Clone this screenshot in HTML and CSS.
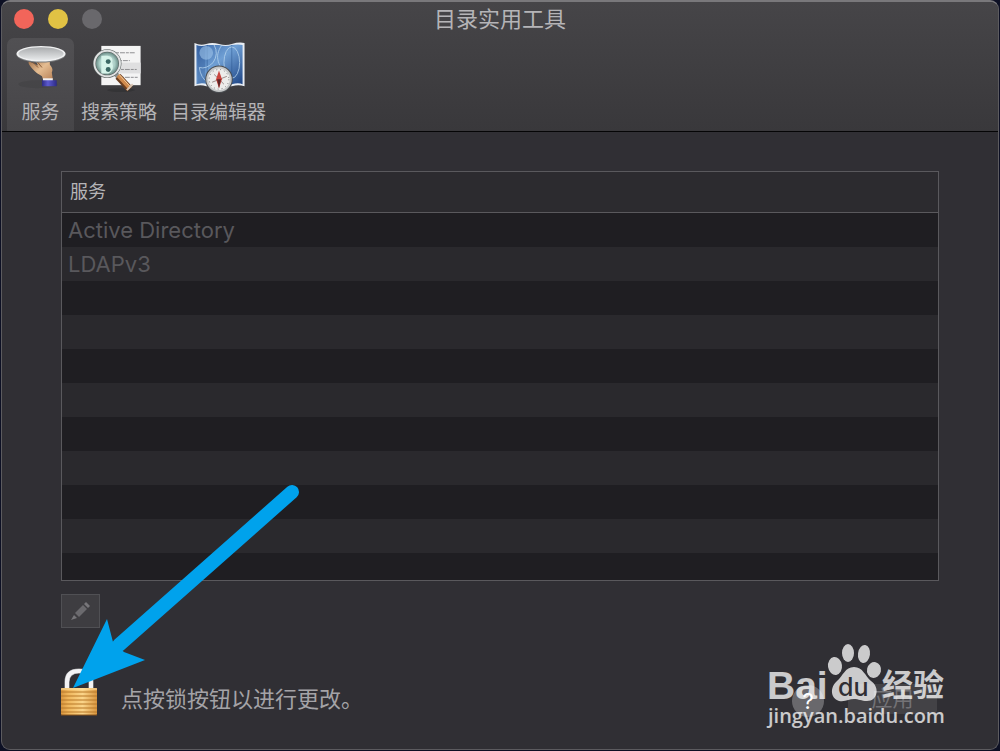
FILE: index.html
```html
<!DOCTYPE html>
<html lang="zh-CN">
<head>
    <meta charset="UTF-8">
    <meta name="viewport" content="width=device-width, initial-scale=1.0">
    <title>目录实用工具</title>
    <link rel="stylesheet" href="styles.css">
</head>
<body>
    <div class="window">
        <header class="header">
            <div class="titlebar">
                <div class="lights">
                    <button type="button" class="light close" aria-label="关闭"></button>
                    <button type="button" class="light minimize" aria-label="最小化"></button>
                    <button type="button" class="light zoom" aria-label="缩放"></button>
                </div>
                <h1>目录实用工具</h1>
            </div>
            <nav class="toolbar">
                <button type="button" class="tab active">
                    <svg class="tab-icon" viewBox="15 40 52 56" aria-hidden="true">
                        <defs>
                            <linearGradient id="plate" x1="0" y1="0" x2="0" y2="1">
                                <stop offset="0" stop-color="#aaacae"/>
                                <stop offset="1" stop-color="#e8eaeb"/>
                            </linearGradient>
                            <linearGradient id="hand" x1="0" y1="0" x2="1" y2="1">
                                <stop offset="0" stop-color="#9a6a45"/>
                                <stop offset="0.5" stop-color="#e5bd92"/>
                                <stop offset="1" stop-color="#b98358"/>
                            </linearGradient>
                            <linearGradient id="cuff" x1="0" y1="0" x2="1" y2="0">
                                <stop offset="0" stop-color="#2d2b83"/>
                                <stop offset="0.4" stop-color="#5d5bd0"/>
                                <stop offset="1" stop-color="#2c2a86"/>
                            </linearGradient>
                        </defs>
                        <ellipse cx="38" cy="85" rx="20" ry="4" fill="#403f42" opacity="0.5"/>
                        <path d="M29 62 C27 63 30 67 32 69 C35 73 39 75 42 77 L43 80 H53 L52 73 C54 69 51 67 50 65 L50 59 L35 60 L38 66 Z" fill="url(#hand)"/>
                        <path d="M32 62 L38 68 M37 62 L42 68" stroke="#8b5c38" stroke-width="1" fill="none"/>
                        <rect x="43" y="79" width="10" height="3" fill="#f1eff2"/>
                        <path d="M42 81 H57 V87 H42 Z" fill="url(#cuff)"/>
                        <ellipse cx="41" cy="55" rx="25" ry="8" fill="#77797b"/>
                        <ellipse cx="41" cy="54" rx="25" ry="8" fill="#f0f1f2"/>
                        <ellipse cx="41" cy="54" rx="23" ry="6.5" fill="url(#plate)"/>
                    </svg>
                    <span>服务</span>
                </button>
                <button type="button" class="tab">
                    <svg class="tab-icon" viewBox="93 40 52 56" aria-hidden="true">
                        <defs>
                            <radialGradient id="lens">
                                <stop offset="0" stop-color="#e2f4ef"/>
                                <stop offset="0.6" stop-color="#a9cdc5"/>
                                <stop offset="1" stop-color="#50706b"/>
                            </radialGradient>
                        </defs>
                        <rect x="101" y="46" width="40" height="40" fill="#f4f4f4"/>
                        <rect x="103" y="63" width="38" height="11" fill="#dfdfe0"/>
                        <g stroke="#8d8d90" stroke-width="1" stroke-dasharray="3 1 5 1">
                            <path d="M116 53 H135"/>
                            <path d="M119 61 H130"/>
                            <path d="M121 70 H137"/>
                            <path d="M121 78 H138"/>
                        </g>
                        <ellipse cx="121" cy="91" rx="14" ry="2" fill="#2c2b2e" opacity="0.5"/>
                        <path d="M114 73 L120 79" stroke="#8d9294" stroke-width="5"/>
                        <path d="M118 77 L130 90" stroke="#6b3e1f" stroke-width="7"/>
                        <path d="M118 76 L130 89" stroke="#d08a4c" stroke-width="4"/>
                        <path d="M119 75 L131 88" stroke="#f4cc9e" stroke-width="1"/>
                        <path d="M127 91 L133 85" stroke="#d8c4b1" stroke-width="2"/>
                        <circle cx="107" cy="64" r="13" fill="url(#lens)" stroke="#59605f" stroke-width="3"/>
                        <circle cx="107" cy="64" r="13" fill="none" stroke="#e0e2e2" stroke-width="2"/>
                        <path d="M101 56 H107 Q114 57 112 63 Q115 71 108 74 H101 Z" fill="#d7f4ea"/>
                        <circle cx="108" cy="62" r="2.5" fill="#3b6864"/>
                        <circle cx="108" cy="70" r="2.5" fill="#3b6864"/>
                    </svg>
                    <span>搜索策略</span>
                </button>
                <button type="button" class="tab">
                    <svg class="tab-icon" viewBox="193 40 52 56" aria-hidden="true">
                        <defs>
                            <linearGradient id="map" x1="0" y1="0" x2="1" y2="1">
                                <stop offset="0" stop-color="#3a67a8"/>
                                <stop offset="0.45" stop-color="#6f9fd4"/>
                                <stop offset="1" stop-color="#1d4485"/>
                            </linearGradient>
                        </defs>
                        <path d="M194 43 Q200 46 206 44 T219 44 Q226 46 232 44 Q239 42 245 43 V87 Q239 85 232 87 H206 Q200 85 194 87 Z" fill="#e8edf3"/>
                        <path d="M196 45 Q201 47 207 45 H219 Q226 47 232 45 Q239 44 243 45 V85 Q239 83 232 85 H207 Q201 83 196 85 Z" fill="url(#map)"/>
                        <path d="M207 45 V85 M232 45 V85" stroke="#29558f" stroke-width="1" opacity="0.5"/>
                        <path d="M197 46 H205 V83 L197 85 Z" fill="#1e4686" opacity="0.3"/>
                        <circle cx="206" cy="53" r="7" fill="#9fc5e9" opacity="0.6"/>
                        <g fill="none" stroke="#b7d5ef" stroke-width="1" opacity="0.8">
                            <path d="M214 45 Q219 54 213 63 Q206 70 199 68 Q200 78 208 84"/>
                            <path d="M222 45 C213 58 219 66 229 80"/>
                            <ellipse cx="232" cy="63" rx="8" ry="16"/>
                        </g>
                        <circle cx="219" cy="80" r="14" fill="#4b4e52"/>
                        <circle cx="219" cy="80" r="12" fill="#edeceb" stroke="#c5c7c8" stroke-width="2"/>
                        <circle cx="219" cy="80" r="10" fill="none" stroke="#77797b" stroke-width="1" stroke-dasharray="1 3"/>
                        <path d="M212 83 L227 77 M214 75 L224 85" stroke="#9c8a89" stroke-width="1"/>
                        <path d="M219 71 L222 80 L219 89 L216 80 Z" fill="#c9453f"/>
                        <path d="M217 80 H221 L219 89 Z" fill="#5c2527"/>
                    </svg>
                    <span>目录编辑器</span>
                </button>
            </nav>
        </header>

        <main class="content">
            <table class="services">
                <thead>
                    <tr><th scope="col">服务</th></tr>
                </thead>
                <tbody>
                    <tr><td>Active Directory</td></tr>
                    <tr><td>LDAPv3</td></tr>
                    <tr><td></td></tr>
                    <tr><td></td></tr>
                    <tr><td></td></tr>
                    <tr><td></td></tr>
                    <tr><td></td></tr>
                    <tr><td></td></tr>
                    <tr><td></td></tr>
                    <tr><td></td></tr>
                    <tr class="partial"><td></td></tr>
                </tbody>
            </table>

            <button type="button" class="edit" aria-label="编辑" disabled>
                <svg viewBox="0 0 20 20" aria-hidden="true">
                    <path d="M0 19 L3 14 L6 17 Z" fill="#77767a"/>
                    <path d="M4 12 L12 4 L16 8 L8 16 Z" fill="#6b6a6e"/>
                    <path d="M13 3 L15 1 L19 5 L17 7 Z" fill="#77767a"/>
                </svg>
            </button>

            <footer class="footer">
                <button type="button" class="lock" aria-label="锁">
                    <svg viewBox="0 0 36 48" aria-hidden="true">
                        <defs>
                            <linearGradient id="brass" x1="0" y1="0" x2="1" y2="0">
                                <stop offset="0" stop-color="#d8953f"/>
                                <stop offset="0.2" stop-color="#f0b75d"/>
                                <stop offset="0.6" stop-color="#fbd58a"/>
                                <stop offset="1" stop-color="#d8953f"/>
                            </linearGradient>
                        </defs>
                        <path d="M6 24 V14 Q6 3 18 3 Q30 3 30 14 V24" fill="none" stroke="#a5a6a8" stroke-width="5"/>
                        <path d="M6 24 V14 Q6 3 18 3 Q30 3 30 14 V24" fill="none" stroke="#f3f3f4" stroke-width="4"/>
                        <rect x="0" y="20" width="36" height="27" rx="1" fill="url(#brass)"/>
                        <path d="M0 24 H36 M0 28 H36 M0 32 H36 M0 36 H36 M0 40 H36 M0 44 H36" stroke="#b87829" stroke-width="1"/>
                        <path d="M0 21 H36" stroke="#ffe5a7" stroke-width="1"/>
                        <path d="M0 47 H36" stroke="#8a551b" stroke-width="1"/>
                    </svg>
                </button>
                <p>点按锁按钮以进行更改。</p>
                <button type="button" class="help" aria-label="帮助">?</button>
                <button type="button" class="apply" disabled>应用</button>
            </footer>
        </main>

        <svg class="arrow" viewBox="0 0 228 206" aria-hidden="true">
            <path d="M219 9 L46 162" stroke="#00a2ec" stroke-width="14" stroke-linecap="round"/>
            <path d="M0 205 L34 136 L40 159 L51 169 L72 177 Z" fill="#00a2ec"/>
        </svg>

        <svg class="watermark" viewBox="0 0 184 88" aria-hidden="true">
            <g fill="#ffffff">
                <text class="wm-bai" x="-1" y="55">Bai</text>
                <ellipse cx="67" cy="22" rx="7" ry="9" transform="rotate(-8 67 22)"/>
                <ellipse cx="80" cy="9" rx="6" ry="9"/>
                <ellipse cx="96" cy="10" rx="6" ry="9" transform="rotate(8 96 10)"/>
                <ellipse cx="106" cy="26" rx="7" ry="8" transform="rotate(12 106 26)"/>
                <path d="M86 23 C95 23 97 32 103 37 C112 43 110 57 99 57 C93 57 91 55 86 55 C81 55 78 58 71 57 C62 54 62 43 69 37 C75 32 77 23 86 23 Z"/>
                <text class="wm-jingyan" x="114" y="52">经验</text>
                <text class="wm-url" x="0" y="79">jingyan.baidu.com</text>
            </g>
            <text class="wm-du" x="70" y="52">du</text>
        </svg>
    </div>
</body>
</html>
```
FILE: styles.css
```css
* {
    box-sizing: border-box;
}

body {
    margin: 0;
    padding: 0 1px 1px;
    min-height: 100vh;
    display: flex;
    background-color: #0d1024;
    font-family: Inter, "Noto Sans CJK SC", sans-serif;
    color: #b5b4b7;
}

button {
    padding: 0;
    border: none;
    font-family: inherit;
    color: inherit;
}

.window {
    position: relative;
    flex: 1;
    display: flex;
    flex-direction: column;
    border: 1px solid #5c5b5f;
    border-top: 2px solid #79787b;
    border-radius: 9px;
    overflow: hidden;
    background-color: #302f34;
}

/* Title bar and toolbar */
.header {
    background: linear-gradient(#464548, #39383b);
    border-bottom: 1px solid #050506;
}

.titlebar {
    display: grid;
    grid-template-columns: 1fr auto 1fr;
    align-items: center;
    height: 36px;
    padding: 0 12px 2px;
}

.titlebar h1 {
    margin: 0;
    font-size: 22px;
    line-height: 32px;
    font-weight: 400;
}

.lights {
    display: flex;
    gap: 14px;
}

.light {
    width: 20px;
    height: 20px;
    border-radius: 50%;
}

.close {
    background-color: #f2655a;
}

.minimize {
    background-color: #e1c244;
}

.zoom {
    background-color: #69686c;
}

.toolbar {
    display: flex;
    padding: 0 5px;
}

.tab {
    display: flex;
    flex-direction: column;
    align-items: center;
    min-width: 67px;
    height: 93px;
    padding: 2px 7px 0;
    border-radius: 7px 7px 0 0;
    background: none;
    font-size: 19px;
    line-height: 36px;
}

.tab.active {
    background: linear-gradient(#515053, #464548);
}

.tab-icon {
    width: 52px;
    height: 56px;
}

/* Services list */
.content {
    flex: 1;
    padding: 39px 59px 0;
}

.services {
    width: 100%;
    border: 1px solid #5a595d;
    border-collapse: separate;
    border-spacing: 0;
    background-color: #1f1e22;
}

.services th {
    height: 41px;
    padding: 0 8px;
    border-bottom: 1px solid #5a595d;
    background-color: #2c2b2f;
    font-size: 18px;
    line-height: 24px;
    font-weight: 400;
    text-align: left;
}

.services td {
    height: 34px;
    padding: 0 6px;
    font-size: 22px;
    line-height: 32px;
    color: #59585c;
}

.services tbody tr:nth-child(even) {
    background-color: #2a292d;
}

.services .partial td {
    height: 27px;
}

.edit {
    display: flex;
    align-items: center;
    justify-content: center;
    width: 39px;
    height: 34px;
    margin-top: 13px;
    border: 1px solid #505054;
    background-color: #3e3d41;
}

.edit svg {
    width: 20px;
    height: 20px;
}

/* Lock row */
.footer {
    display: flex;
    align-items: center;
    margin-top: 39px;
    padding-right: 2px;
}

.footer p {
    flex: 1;
    margin: 0 0 0 24px;
    padding-top: 14px;
    font-size: 22px;
    line-height: 32px;
    color: #a4a3a7;
}

.lock {
    width: 36px;
    height: 48px;
    background: none;
}

.lock svg {
    display: block;
}

.help {
    width: 32px;
    height: 32px;
    margin: 18px 24px 0 0;
    border-radius: 50%;
    background-color: #69686c;
    font-size: 22px;
    color: #ffffff;
}

.apply {
    width: 89px;
    height: 30px;
    margin-top: 14px;
    border-radius: 4px;
    background-color: #434246;
    font-size: 21px;
    line-height: 30px;
    color: #737276;
}

/* Pointer and watermark lie over the window */
.arrow {
    position: absolute;
    left: 71px;
    top: 481px;
    width: 228px;
    height: 206px;
    pointer-events: none;
}

.watermark {
    position: absolute;
    right: 46px;
    bottom: 17px;
    width: 184px;
    height: 88px;
    overflow: visible;
    pointer-events: none;
}

.watermark g {
    opacity: 0.75;
}

.wm-bai {
    font-family: "Liberation Sans", sans-serif;
    font-size: 39px;
    font-weight: 700;
}

.wm-jingyan {
    font-family: "Noto Sans CJK SC", sans-serif;
    font-size: 31px;
    font-weight: 700;
}

.wm-url {
    font-family: "Open Sans", sans-serif;
    font-size: 20px;
    font-weight: 600;
}

.wm-du {
    font-family: Inter, sans-serif;
    font-size: 25px;
    font-weight: 500;
    fill: #302f34;
}
```
